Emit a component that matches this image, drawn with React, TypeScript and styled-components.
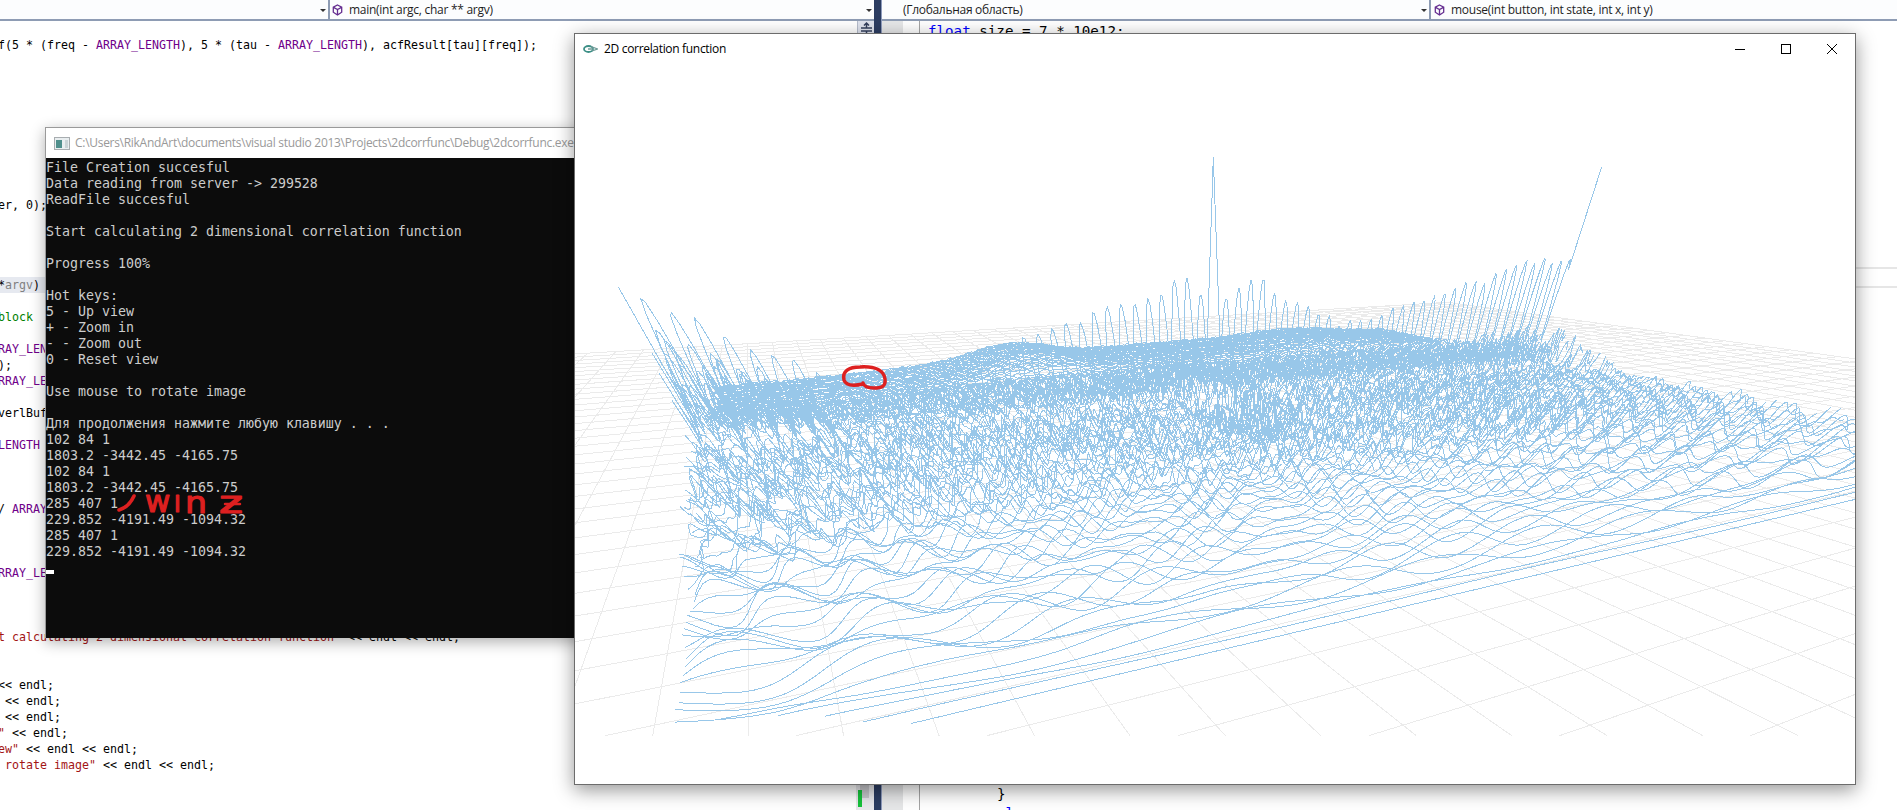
import React from "react";
import styled, { createGlobalStyle } from "styled-components";

const GlobalStyle = createGlobalStyle`
  body { margin: 0; background: #fff; overflow: hidden; }
  * { box-sizing: border-box; }
`;

const UI_FONT = `"Open Sans", "Noto Sans", sans-serif`;
const MONO_FONT = `"DejaVu Sans Mono", "Liberation Mono", monospace`;

/* ---------- editor ---------- */

const Screen = styled.div`
  position: relative;
  width: 1897px;
  height: 810px;
  overflow: hidden;
  background: #fff;
`;

const Editor = styled.div`
  display: grid;
  grid-template-columns: 874px 8px 1fr;
  height: 810px;
`;

const Pane = styled.section`
  display: flex;
  flex-direction: column;
  min-width: 0;
`;

const Divider = styled.div`
  background: #2c3d62;
  border-right: 1px solid #8e9bbc;
`;

const NavBar = styled.header`
  display: flex;
  flex: none;
  height: 21px;
  border-bottom: 2px solid #8e9cb4;
  background: #fcfdfe;
`;

const Combo = styled.div<{ $width?: number; $indent: number }>`
  display: flex;
  align-items: center;
  flex: ${(p) => (p.$width ? `0 0 ${p.$width}px` : "1 1 0")};
  padding: 1px 2px 0 ${(p) => p.$indent}px;
  & + & {
    border-left: 2px solid #8e9cb4;
  }
`;

const ComboText = styled.span<{ $spacing: number }>`
  flex: 1;
  margin-left: 6px;
  font: 12px/18px ${UI_FONT};
  letter-spacing: ${(p) => p.$spacing}px;
  color: #1e1e1e;
  white-space: pre;
`;

const Caret = styled.i`
  border: 3px solid transparent;
  border-top-color: #333;
  border-bottom: 0;
`;

const Code = styled.div`
  flex: 1;
  display: flex;
  flex-direction: column;
  padding-top: 16px;
  font: 11.63px/16px ${MONO_FONT};
  color: #000;
`;

const CodeLine = styled.div<{ $active?: boolean }>`
  height: 16px;
  text-indent: -2px;
  white-space: pre;
  background: ${(p) => (p.$active ? "#e6e9f0" : "transparent")};
  width: ${(p) => (p.$active ? "60px" : "auto")};
`;

type Tone = "macro" | "string" | "comment" | "keyword" | "param";
const TONES: Record<Tone, string> = {
  macro: "#6f008a",
  string: "#a31515",
  comment: "#008000",
  keyword: "#0000ff",
  param: "#808080",
};
const Token = styled.span<{ $tone: Tone }>`
  color: ${(p) => TONES[p.$tone]};
`;

const RightBody = styled.div`
  flex: 1;
  display: grid;
  grid-template-columns: 21px 17px 1fr;
`;
const Gutter = styled.div`
  background: #e6e7e8;
`;
const Outline = styled.div`
  border-right: 1px solid #a5a5a5;
`;
const BigCode = styled.div`
  display: flex;
  flex-direction: column;
  justify-content: space-between;
  padding-top: 1px;
  margin-bottom: -13px;
  font: 14.2px/19px ${MONO_FONT};
  white-space: pre;
`;
const CodeBlock = styled.div<{ $indent: number }>`
  padding-left: ${(p) => p.$indent}px;
`;
const CurrentLine = styled.div`
  height: 21px;
  margin-top: 226px;
  margin-bottom: auto;
  border: 2px solid #e6e6e6;
  border-right: 0;
`;

const SplitHandle = styled.div`
  position: absolute;
  left: 857px;
  top: 21px;
  width: 17px;
  height: 16px;
  background: #dfe3ee;
  border-left: 1px solid #b5bccb;
`;
const ScrollTrack = styled.div`
  position: absolute;
  left: 856px;
  bottom: 0;
  width: 18px;
  height: 40px;
  background: #e8e8ec;
`;
const ScrollThumb = styled.div`
  width: 9px;
  height: 28px;
  margin-left: 4px;
  background: #c8c8cc;
`;
const ChangeMark = styled.div`
  width: 4px;
  height: 17px;
  margin: -8px 0 0 2px;
  background: #16c23b;
  position: relative;
`;

/* ---------- windows ---------- */

const Console = styled.div`
  position: absolute;
  left: 45px;
  top: 127px;
  width: 620px;
  height: 511px;
  border: 1px solid #9a9a9a;
  border-bottom: 0;
  background: #0c0c0c;
  box-shadow: 0 4px 14px rgba(0, 0, 0, 0.32);
`;
const ConsoleTitle = styled.div`
  display: flex;
  align-items: center;
  height: 30px;
  padding-left: 8px;
  background: #fff;
  font: 12px/16px ${UI_FONT};
  letter-spacing: -0.29px;
  color: #999;
  white-space: pre;
`;
const TitleLabel = styled.span<{ $gap: number }>`
  margin-left: ${(p) => p.$gap}px;
`;
const ConsoleOut = styled.div`
  padding-top: 2px;
  font: 13.29px/16px ${MONO_FONT};
  color: #ccc;
`;
const ConsoleRow = styled.div`
  height: 16px;
  white-space: pre;
`;
const Cursor = styled.div`
  width: 8px;
  height: 4px;
  margin-top: 10px;
  background: #fff;
`;
const Scribble = styled.svg`
  position: absolute;
  left: 66px;
  top: 360px;
  overflow: visible;
`;

const PlotWindow = styled.div`
  position: absolute;
  left: 574px;
  top: 33px;
  width: 1282px;
  height: 752px;
  border: 1px solid #6c6c6c;
  background: #fff;
  box-shadow: 0 5px 18px rgba(0, 0, 0, 0.42);
`;
const PlotTitle = styled.div`
  display: flex;
  align-items: center;
  height: 30px;
  padding-left: 8px;
  font: 12px/16px ${UI_FONT};
  letter-spacing: -0.32px;
  color: #000;
`;
const WindowButtons = styled.div`
  display: flex;
  margin-left: auto;
`;
const WindowButton = styled.div`
  display: grid;
  place-items: center;
  width: 46px;
  height: 30px;
`;
const Canvas = styled.svg`
  display: block;
`;

/* ---------- surface geometry ---------- */

const STEP_U = 0.04066;
const STEP_V = -0.08132;
const RIDGE = -14.66;
type Pt = [number, number, number];

// Homogeneous projection of a floor position (u, v) raised by z.
const project = (u: number, v: number, z: number): Pt => {
  const a = u * STEP_U;
  const b = v * STEP_V;
  const w = 1 + a + b - z * 0.01;
  return [
    (652.7 + a * 3095 + b * 747.4 - z * 12.15) / w,
    (735.7 + (a + b) * 205 - z * 14) / w,
    w,
  ];
};

const fmt = (n: number) => n.toFixed(1);

const segment = (u0: number, v0: number, u1: number, v1: number) => {
  const w0 = 1 + u0 * STEP_U + v0 * STEP_V;
  const w1 = 1 + u1 * STEP_U + v1 * STEP_V;
  if (w0 < 1 && w1 < 1) return "";
  const t = (1 - w0) / (w1 - w0);
  let [a, b, c, d] = [u0, v0, u1, v1];
  if (w0 < 1) [a, b] = [u0 + (u1 - u0) * t, v0 + (v1 - v0) * t];
  if (w1 < 1) [c, d] = [u0 + (u1 - u0) * t, v0 + (v1 - v0) * t];
  const p = project(a, b, 0);
  const q = project(c, d, 0);
  return `M${fmt(p[0])} ${fmt(p[1])}L${fmt(q[0])} ${fmt(q[1])}`;
};

const floorPath = () => {
  let s = "";
  for (let k = -30; k <= 41; k++) s += segment(k, -34.25, k, 14);
  for (let m = -34; m <= 7; m++) s += segment(-30, m - 0.25, 41, m - 0.25);
  return s;
};

const PEAKS: [number, number][] = [
  [0, 31], [0.9, 27], [1.7, 21.5], [2.6, 18], [3.6, 12], [4.5, 8], [6.5, 9], [7.8, 16], [9.7, 19.5],
  [11.8, 24.5], [13.2, 27], [13.7, 31], [14, 25], [15.2, 25], [15.7, 31], [16.8, 24.5], [18, 22],
  [19.2, 16], [20, 17], [22, 20.5], [24.4, 25], [26.8, 30], [29, 32],
];
const peakAt = (u: number) => {
  for (let i = 1; i < PEAKS.length; i++) {
    if (u <= PEAKS[i][0]) {
      const [x0, y0] = PEAKS[i - 1];
      const [x1, y1] = PEAKS[i];
      return y0 + ((y1 - y0) * (u - x0)) / (x1 - x0);
    }
  }
  return 32;
};

const hash = (a: number, b: number) => {
  const s = Math.sin(a * 127.1 + b * 311.7) * 43758.5453;
  return s - Math.floor(s);
};
const bump = (x: number, c: number, s: number) => Math.exp(-(((x - c) / s) ** 2));
const smooth = (x: number, a: number, b: number) => {
  const t = Math.min(1, Math.max(0, (x - a) / (b - a)));
  return t * t * (3 - 2 * t);
};
const valueNoise = (x: number, row: number) => {
  const i = Math.floor(x);
  const f = x - i;
  const s = f * f * (3 - 2 * f);
  return (hash(i, row) * (1 - s) + hash(i + 1, row) * s) * 2 - 1;
};

const heightAt = (u: number, v: number, row: number) => {
  const d = 1.2 - v;
  const front = smooth(d, 0, 1.6) * (1 - 0.55 * smooth(d, 7, 12)) * (1 - 0.8 * smooth(d, 18, 21));
  let z = 0.7 + front * 1.5 * Math.sin(u * (0.5 + d * 0.62) + d * 2.3 - 1);
  z += front * 1.1 * Math.sin(u * (0.3 + d * 1.05) - d * 2.9 + 1);
  z += front * 0.5 * valueNoise(u * (0.6 + d * 0.22), row + 900);
  // The texture is rough in the middle and calms down towards the far right.
  const calm = 1 - 0.75 * smooth(u, 20, 28);
  const rough = smooth(d, 6, 9) * (1 - smooth(d, 19.6, 21.2)) * calm;
  z += rough * (2.5 + 0.6 * bump(u, 3, 6)) * valueNoise(u * 8, row);
  z += rough * 2 * Math.abs(valueNoise(u * 5 + row * 0.4, row + 400)) * bump(v, RIDGE, 6);
  z += smooth(d, 11, 14) * smooth(u, 17, 24) * 1.6 * valueNoise(u * 7, row + 30) * (1 - smooth(d, 20, 23));
  z += smooth(d, 20, 21.6) * 0.28 * valueNoise(u * 5, row);
  z += smooth(d, 20.5, 23.5) * (4.2 * bump(u, 10.6, 2.1) + 2.6 * bump(u, 23.6, 3.2));
  z += smooth(d, 20, 23) * bump(u, 17, 5);
  z -= smooth(d, 18, 21) * 2.7 * bump(u, 0, 7);
  const edge = bump(u, 14.6, 0.9) + 0.3 * bump(u, 0, 0.8) + 1.3 * bump(u, 29, 0.4);
  z += edge * 11 * bump(v, RIDGE, 2.9) * hash(Math.floor(u * 10), row + 50);
  z -= 9 * bump(u, 14.4, 1.3) * bump(v, RIDGE + 2, 2.8) * hash(Math.floor(u * 9), row + 70);
  z -= 5 * bump(u, 28.8, 0.5) * bump(v, RIDGE, 1.6) * hash(Math.floor(u * 9), row + 80);
  const r = Math.abs(v - RIDGE);
  if (r < 1.2) {
    const lobe = Math.abs(Math.cos((Math.PI * (u - 14.6)) / 0.42));
    const side = u < 3 ? 0.9 - r * 0.3 : 0.34 - r * 0.1;
    const k = r < 0.1 ? 1 : side * (0.55 + 0.5 * hash(Math.floor(u * 2.4), row));
    z = Math.max(z, peakAt(u) * k * Math.pow(lobe, 0.75) * (0.94 + 0.1 * hash(Math.floor(u / 0.42), 3)));
    if (r < 0.1) {
      z = Math.max(z, 53.5 * (1 - Math.abs(u - 14.6) / 0.3));
      if (u < 0.03) z = 31.5;
      if (u > 28.97) z = 53.5;
    }
  }
  return z;
};

const surfacePaths = () => {
  const rows: string[] = [];
  const row = (i: number) => {
    const v = 1.2 - i * 0.26;
    let s = "";
    const per = i < 22 ? 8 : 20;
    for (let j = 0; j <= 29 * per; j++) {
      const u = j / per;
      if (u < 0.28 - i * 0.007) continue;
      const p = project(u, v, heightAt(u, v, i));
      if (p[2] < 1.005) continue;
      s += `${s ? "L" : "M"}${fmt(p[0])} ${fmt(p[1])}`;
    }
    rows.push(s);
  };
  // Rows bunch up towards the back of the array.
  for (let i = 0; i < 84; i++) row(i);
  for (let i = 84; i <= 101; i += 0.5) row(i);
  return rows;
};

const FLOOR = floorPath();
const SURFACE = surfacePaths();

/* ---------- content ---------- */

const M = ({ children }: { children: string }) => <Token $tone="macro">{children}</Token>;
const S = ({ children }: { children: string }) => <Token $tone="string">{children}</Token>;

const CODE: Record<number, React.ReactNode> = {
  0: <>f(5 * (freq - <M>ARRAY_LENGTH</M>), 5 * (tau - <M>ARRAY_LENGTH</M>), acfResult[tau][freq]);</>,
  10: "er, 0);",
  15: <>*<Token $tone="param">argv</Token>)</>,
  17: <Token $tone="comment">block</Token>,
  19: <M>RAY_LEN</M>,
  20: ");",
  21: <M>RRAY_LE</M>,
  23: "verlBuf",
  25: <M>LENGTH</M>,
  29: <>/ <M>ARRAY</M></>,
  33: <M>RRAY_LE</M>,
  37: <><S>{'t calculating 2 dimensional correlation function"'}</S>{" << endl << endl;"}</>,
  40: "<< endl;",
  41: " << endl;",
  42: " << endl;",
  43: <><S>{'"'}</S>{" << endl;"}</>,
  44: <><S>{'ew"'}</S>{" << endl << endl;"}</>,
  45: <><S>{' rotate image"'}</S>{" << endl << endl;"}</>,
};

const OUTPUT = [
  "File Creation succesful",
  "Data reading from server -> 299528",
  "ReadFile succesful",
  "",
  "Start calculating 2 dimensional correlation function",
  "",
  "Progress 100%",
  "",
  "Hot keys:",
  "5 - Up view",
  "+ - Zoom in",
  "- - Zoom out",
  "0 - Reset view",
  "",
  "Use mouse to rotate image",
  "",
  "Для продолжения нажмите любую клавишу . . .",
  "102 84 1",
  "1803.2 -3442.45 -4165.75",
  "102 84 1",
  "1803.2 -3442.45 -4165.75",
  "285 407 1",
  "229.852 -4191.49 -1094.32",
  "285 407 1",
  "229.852 -4191.49 -1094.32",
];

const MethodIcon = () => (
  <svg width="11" height="12" viewBox="0 0 11 12" fill="none" stroke="#652d90" strokeWidth="1.3">
    <path d="M5.5 1 9.7 3.2v5L5.5 11 1.3 8.2v-5zM1.5 3.4 5.5 5.6l4-2.2M5.5 5.6V11" />
  </svg>
);

export default function App() {
  return (
    <Screen>
      <GlobalStyle />
      <Editor>
        <Pane>
          <NavBar>
            <Combo $width={328} $indent={0}>
              <ComboText $spacing={0}> </ComboText>
              <Caret />
            </Combo>
            <Combo $indent={2}>
              <MethodIcon />
              <ComboText $spacing={-0.27}>main(int argc, char ** argv)</ComboText>
              <Caret />
            </Combo>
          </NavBar>
          <Code>
            {Array.from({ length: 46 }, (_, i) => (
              <CodeLine key={i} $active={i === 15}>{CODE[i]}</CodeLine>
            ))}
          </Code>
        </Pane>
        <Divider />
        <Pane>
          <NavBar>
            <Combo $width={547} $indent={15}>
              <ComboText $spacing={-0.3}>(Глобальная область)</ComboText>
              <Caret />
            </Combo>
            <Combo $indent={3}>
              <MethodIcon />
              <ComboText $spacing={-0.27}>mouse(int button, int state, int x, int y)</ComboText>
            </Combo>
          </NavBar>
          <RightBody>
            <Gutter />
            <Outline />
            <BigCode>
              <CodeBlock $indent={8}>
                <Token $tone="keyword">float</Token> size = 7 * 10e12;
              </CodeBlock>
              <CurrentLine />
              <CodeBlock $indent={77}>
                {"}\n"}
                <Token $tone="keyword">else</Token>
              </CodeBlock>
            </BigCode>
          </RightBody>
        </Pane>
      </Editor>

      <SplitHandle>
        <svg width="16" height="14" fill="none" stroke="#333f5c" strokeWidth="1.5">
          <path d="M3 7h11M3 10h11M8.5 10v4M8.5 7V2M6 4.5 8.5 2 11 4.5" />
        </svg>
      </SplitHandle>
      <ScrollTrack>
        <ScrollThumb />
        <ChangeMark />
      </ScrollTrack>

      <Console>
        <ConsoleTitle>
          <svg width="16" height="13">
            <rect x=".5" y=".5" width="15" height="12" fill="#e9eef0" stroke="#a8adb0" />
            <rect x="2" y="3" width="6" height="8" fill="#4f8f8c" />
            <rect x="11" y="3" width="3" height="8" fill="#c9d3d6" />
          </svg>
          <TitleLabel $gap={5}>
            {"C:\\Users\\RikAndArt\\documents\\visual studio 2013\\Projects\\2dcorrfunc\\Debug\\2dcorrfunc.exe"}
          </TitleLabel>
        </ConsoleTitle>
        <ConsoleOut>
          {OUTPUT.map((line, i) => (
            <ConsoleRow key={i}>{line}</ConsoleRow>
          ))}
          <Cursor />
        </ConsoleOut>
        <Scribble width="140" height="30" fill="none" stroke="#dd2020" strokeWidth="3.6" strokeLinecap="round" strokeLinejoin="round">
          <path d="M7 22Q17 19 22 8" />
          <g fill="#dd2020" strokeWidth="1.2" fontFamily="DejaVu Sans">
            <text x="33" y="24" fontSize="31">w</text>
            <text x="62" y="24" fontSize="23">I</text>
            <text x="73" y="25" fontSize="31" textLength="22" lengthAdjust="spacingAndGlyphs">n</text>
            <text x="107" y="25" fontSize="31" textLength="24" lengthAdjust="spacingAndGlyphs">z</text>
          </g>
          <path d="M113 16H128" strokeWidth="2.5" />
        </Scribble>
      </Console>

      <PlotWindow>
        <PlotTitle>
          <svg width="15" height="10" fill="none">
            <ellipse cx="5.5" cy="5" rx="4.5" ry="3" stroke="#3c8f86" strokeWidth="1.8" />
            <path d="M5 5h5M8 2.5 14.5 5 9 7" stroke="#6f9a97" strokeWidth="1.3" />
          </svg>
          <TitleLabel $gap={6}>2D correlation function</TitleLabel>
          <WindowButtons>
            <WindowButton>
              <svg width="10" height="10" stroke="#000"><path d="M0 5.5H10" /></svg>
            </WindowButton>
            <WindowButton>
              <svg width="10" height="10" stroke="#000" fill="none"><rect x=".5" y=".5" width="9" height="9" /></svg>
            </WindowButton>
            <WindowButton>
              <svg width="10" height="10" stroke="#000"><path d="M0 0 10 10M10 0 0 10" /></svg>
            </WindowButton>
          </WindowButtons>
        </PlotTitle>
        <Canvas width="1280" height="720" viewBox="575 64 1280 720" fill="none">
          <path d={FLOOR} stroke="#ebebeb" shapeRendering="crispEdges" />
          <g stroke="#98c7e9" shapeRendering="crispEdges">
            {SURFACE.map((d, i) => (
              <path key={i} d={d} />
            ))}
          </g>
          <path
            d="M863 384C854 386 846 386 844 380C842 371 849 367 860 367C876 366 884 371 885 379C886 387 881 388 874 388C866 388 864 386 863 383Z"
            stroke="#dd2020"
            strokeWidth="3.5"
            strokeLinejoin="round"
          />
        </Canvas>
      </PlotWindow>
    </Screen>
  );
}
